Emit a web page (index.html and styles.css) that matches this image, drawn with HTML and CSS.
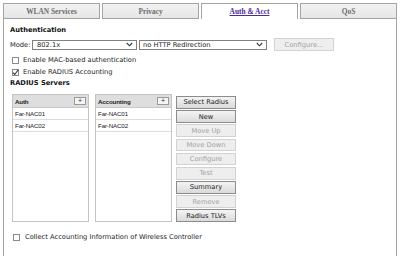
FILE: index.html
```html
<!DOCTYPE html>
<html lang="en">

<head>
    <meta charset="UTF-8">
    <meta name="viewport" content="width=device-width, initial-scale=1.0">
    <title>WLAN - Auth &amp; Acct</title>
    <link rel="stylesheet" href="styles.css">
</head>

<body>
    <div class="tabs">
        <div class="tab">WLAN Services</div>
        <div class="tab">Privacy</div>
        <div class="tab active"><a href="#">Auth &amp; Acct</a></div>
        <div class="tab">QoS</div>
    </div>

    <div class="panel">
        <div class="heading">Authentication</div>

        <div class="modeRow">
            <span class="modeLabel">Mode:</span>
            <div class="select selMode">
                <span>802.1x</span>
                <svg width="7" height="5" viewBox="0 0 7 5"><path d="M0.8 1 L3.5 3.8 L6.2 1" fill="none" stroke="#333" stroke-width="1.1"/></svg>
            </div>
            <div class="select selHttp">
                <span>no HTTP Redirection</span>
                <svg width="7" height="5" viewBox="0 0 7 5"><path d="M0.8 1 L3.5 3.8 L6.2 1" fill="none" stroke="#333" stroke-width="1.1"/></svg>
            </div>
            <div class="btn disabled configBtn">Configure...</div>
        </div>

        <label class="checkRow first">
            <span class="box"></span>
            Enable MAC-based authentication
        </label>
        <label class="checkRow second">
            <span class="box">
                <svg width="7" height="7" viewBox="0 0 7 7"><path d="M1 3.6 L2.8 5.5 L6.2 0.8" fill="none" stroke="#333" stroke-width="1.1"/></svg>
            </span>
            Enable RADIUS Accounting
        </label>

        <div class="heading servers">RADIUS Servers</div>

        <div class="serverArea">
            <div class="list">
                <div class="listHead">Auth<span class="plus">+</span></div>
                <div class="listItem">Far-NAC01</div>
                <div class="listItem">Far-NAC02</div>
            </div>
            <div class="list">
                <div class="listHead">Accounting<span class="plus">+</span></div>
                <div class="listItem">Far-NAC01</div>
                <div class="listItem">Far-NAC02</div>
            </div>
            <div class="btnColumn">
                <div class="btn">Select Radius</div>
                <div class="btn">New</div>
                <div class="btn disabled">Move Up</div>
                <div class="btn disabled">Move Down</div>
                <div class="btn disabled">Configure</div>
                <div class="btn disabled">Test</div>
                <div class="btn">Summary</div>
                <div class="btn disabled">Remove</div>
                <div class="btn">Radius TLVs</div>
            </div>
        </div>

        <label class="checkRow collect">
            <span class="box"></span>
            Collect Accounting Information of Wireless Controller
        </label>
    </div>
</body>

</html>
```

FILE: styles.css
```css
body {
    margin: 0;
    font-family: "DejaVu Sans", Verdana, sans-serif;
    font-size: 6.7px;
    color: #222222;
    background: #ffffff;
}

/* tab bar */
.tabs {
    display: flex;
    gap: 2px;
    padding: 3px 3px 0 3px;
    height: 16px;
}

.tab {
    flex: 1;
    box-sizing: border-box;
    border: 1px solid #a4a4a4;
    background: linear-gradient(#f2f2f2, #e6e6e6);
    font-family: "Liberation Serif", "Times New Roman", serif;
    font-weight: bold;
    font-size: 7.4px;
    color: #6d6d6d;
    display: flex;
    align-items: center;
    justify-content: center;
}

.tab.active {
    background: #ffffff;
    border-bottom: none;
}

.tab.active a {
    color: #4a2a9c;
    text-decoration: underline;
}

/* panel */
.panel {
    margin: 0 3px;
    height: 237px;
    border-left: 1px solid #a4a4a4;
    border-right: 1px solid #a4a4a4;
    padding: 6px 0 0 6px;
    box-sizing: border-box;
}

.heading {
    font-weight: bold;
    line-height: 10px;
    color: #111111;
}

.modeRow {
    display: flex;
    align-items: center;
    height: 13px;
    margin-top: 3px;
}

.modeLabel {
    width: 22px;
}

.select {
    box-sizing: border-box;
    height: 10px;
    border: 1px solid #808080;
    display: flex;
    align-items: center;
    justify-content: space-between;
    padding: 0 3px 0 4px;
    background: #ffffff;
}

.selMode {
    width: 105px;
}

.selHttp {
    width: 128px;
    margin-left: 2px;
    padding-left: 3px;
}

.configBtn {
    width: 51px;
    height: 13px;
    margin-left: 7px;
}

/* checkboxes */
.checkRow {
    display: flex;
    align-items: center;
    height: 10px;
    margin-left: 2px;
    gap: 4px;
}

.checkRow.first {
    margin-top: 4px;
}

.checkRow.second {
    margin-top: 2px;
}

.checkRow.collect {
    margin-top: 10px;
    margin-left: 3px;
    gap: 5px;
}

.box {
    box-sizing: border-box;
    width: 7px;
    height: 7px;
    border: 1px solid #8a8a8a;
    background: #ffffff;
    display: flex;
    align-items: center;
    justify-content: center;
}

.box svg {
    flex: none;
}

.heading.servers {
    margin-top: 1px;
}

/* server lists */
.serverArea {
    display: flex;
    margin-top: 6px;
    margin-left: 2px;
    height: 128px;
}

.list {
    box-sizing: border-box;
    width: 77px;
    border: 1px solid #c4c4c4;
    margin-right: 6px;
    font-family: "Liberation Sans", Arial, sans-serif;
    font-size: 6.2px;
    letter-spacing: -0.15px;
}

.list + .list {
    margin-right: 4px;
}

.listHead {
    height: 12px;
    background: #dedede;
    font-weight: bold;
    display: flex;
    align-items: center;
    justify-content: space-between;
    padding: 0 2px 0 2px;
    border-bottom: 1px solid #c8c8c8;
}

.plus {
    box-sizing: border-box;
    width: 12px;
    height: 8px;
    border: 1px solid #9a9a9a;
    background: #f4f4f4;
    font-weight: normal;
    font-size: 7px;
    line-height: 6px;
    text-align: center;
    color: #333333;
}

.listItem {
    height: 11px;
    line-height: 11px;
    padding-left: 2px;
    border-bottom: 1px solid #dcdcdc;
}

.btnColumn {
    display: flex;
    flex-direction: column;
    gap: 1.5px;
    padding-top: 2px;
}

.btn {
    box-sizing: border-box;
    width: 60px;
    height: 13px;
    border: 1px solid #8c8c8c;
    background: linear-gradient(#f4f4f4, #dadada);
    display: flex;
    align-items: center;
    justify-content: center;
    color: #222222;
}

.btn.disabled {
    border: 1px solid #d2d2d2;
    background: #eeeeee;
    color: #a2a2a2;
}
```
